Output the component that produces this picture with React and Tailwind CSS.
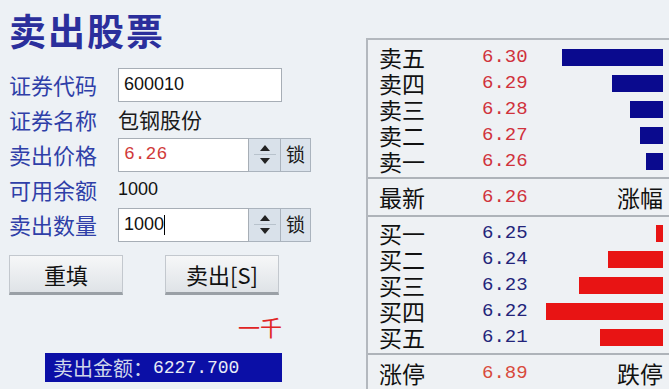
import React from "react";

const cjk = "font-['Noto_Sans_CJK_SC',sans-serif]";
const mono = "font-['Liberation_Mono',monospace]";

const sells = [
  { label: "卖五", price: "6.30", bar: 101 },
  { label: "卖四", price: "6.29", bar: 51 },
  { label: "卖三", price: "6.28", bar: 33 },
  { label: "卖二", price: "6.27", bar: 23 },
  { label: "卖一", price: "6.26", bar: 17 },
];

const buys = [
  { label: "买一", price: "6.25", bar: 7 },
  { label: "买二", price: "6.24", bar: 55 },
  { label: "买三", price: "6.23", bar: 84 },
  { label: "买四", price: "6.22", bar: 117 },
  { label: "买五", price: "6.21", bar: 63 },
];

const Spin = () => (
  <div className="flex h-full">
    <div className="w-[31px] h-full flex flex-col items-center justify-center gap-[3px] bg-[#d9e1ea] border-y border-[#aab3bd]">
      <svg width="10" height="6" viewBox="0 0 10 6">
        <path d="M5 0 L10 6 L0 6 Z" fill="#222" />
      </svg>
      <div className="w-[22px] h-px bg-[#b8c2cc]" />
      <svg width="10" height="6" viewBox="0 0 10 6">
        <path d="M0 0 L10 0 L5 6 Z" fill="#222" />
      </svg>
    </div>
    <div className="w-[31px] h-full flex items-center justify-center bg-[#dbe3ec] border border-[#aab3bd] text-[19px] text-[#1a1a1a]">
      锁
    </div>
  </div>
);

const BookRow = ({ label, price, bar, priceColor, barColor }) => (
  <div className="flex items-center h-[26px]">
    <div className="w-[103px] text-[23px] leading-none text-[#111]">{label}</div>
    <div className={`${mono} text-[19px] leading-none ${priceColor}`}>{price}</div>
    <div className="flex-1 flex justify-end">
      <div className={`h-[17px] ${barColor}`} style={{ width: bar }} />
    </div>
  </div>
);

export default function App() {
  return (
    <div className={`w-[669px] h-[389px] overflow-hidden bg-[#edf1f5] flex ${cjk}`}>
      {/* left form */}
      <div className="w-[366px] pl-[9px] flex flex-col">
        <div className="mt-[12px] h-[55px] text-[37px] font-bold leading-none text-[#2b2f9c] tracking-[2px]">
          卖出股票
        </div>

        <div className="flex flex-col text-[22px] text-[#2f3fa8]">
          <div className="h-[35px] flex items-center">
            <span className="w-[109px]">证券代码</span>
            <div className="w-[164px] h-[34px] bg-white border border-[#a7aeb6] flex items-center pl-[5px] text-[18px] text-[#111] font-['Liberation_Sans',sans-serif]">
              600010
            </div>
          </div>
          <div className="h-[35px] flex items-center">
            <span className="w-[109px]">证券名称</span>
            <span className="text-[#1a1a1a] text-[21px]">包钢股份</span>
          </div>
          <div className="h-[35px] flex items-center">
            <span className="w-[109px]">卖出价格</span>
            <div className="h-[34px] flex">
              <div className={`w-[131px] h-full bg-white border border-[#a7aeb6] flex items-center pl-[5px] text-[18px] text-[#d03a3a] ${mono}`}>
                6.26
              </div>
              <Spin />
            </div>
          </div>
          <div className="h-[35px] flex items-center">
            <span className="w-[109px]">可用余额</span>
            <span className="text-[18px] text-[#111] font-['Liberation_Sans',sans-serif]">1000</span>
          </div>
          <div className="h-[35px] flex items-center">
            <span className="w-[109px]">卖出数量</span>
            <div className="h-[34px] flex">
              <div className="w-[131px] h-full bg-white border border-[#a7aeb6] flex items-center pl-[5px] text-[18px] text-[#111] font-['Liberation_Sans',sans-serif]">
                1000<span className="w-px h-[20px] bg-black" />
              </div>
              <Spin />
            </div>
          </div>
        </div>

        {/* buttons */}
        <div className="mt-[13px] flex gap-[42px]">
          <button className="w-[114px] h-[40px] bg-gradient-to-b from-[#f6f7f8] to-[#dfe3e7] border border-[#c3c8ce] border-b-[3px] border-b-[#9aa0a6] text-[22px] text-[#111]">
            重填
          </button>
          <button className="w-[114px] h-[40px] bg-gradient-to-b from-[#f6f7f8] to-[#dfe3e7] border border-[#c3c8ce] border-b-[3px] border-b-[#9aa0a6] text-[22px] text-[#111]">
            卖出[S]
          </button>
        </div>

        <div className="mt-[20px] w-[273px] flex justify-end text-[22px] leading-none text-[#e02424]">
          一千
        </div>

        <div className="mt-[16px] ml-[36px] w-[237px] h-[29px] bg-[#0b0fa6] flex items-center pl-[8px] text-[20px] leading-none">
          <span className="text-[#cfd6ea]">卖出金额：</span>
          <span className={`${mono} text-[18px] text-[#e8ecf6]`}>6227.700</span>
        </div>
      </div>

      {/* right order book */}
      <div className="flex-1 pt-[38px]">
        <div className="h-full bg-[#eef1f4] border-l-2 border-t-2 border-[#b3b8be] pl-[11px] pr-[6px]">
          <div className="pt-[4px] pb-[3px]">
            {sells.map((r) => (
              <BookRow key={r.label} {...r} priceColor="text-[#d0323c]" barColor="bg-[#0a0a8e]" />
            ))}
          </div>
          <div className="-ml-[11px] -mr-[6px] border-t-2 border-[#aeb3b9]" />
          <div className="h-[36px] flex items-center">
            <div className="w-[103px] text-[23px] leading-none text-[#111]">最新</div>
            <div className={`${mono} text-[19px] leading-none text-[#d0323c]`}>6.26</div>
            <div className="flex-1 text-right text-[23px] leading-none text-[#111]">涨幅</div>
          </div>
          <div className="-ml-[11px] -mr-[6px] border-t-2 border-[#aeb3b9]" />
          <div className="pt-[3px] pb-[3px]">
            {buys.map((r) => (
              <BookRow key={r.label} {...r} priceColor="text-[#23247a]" barColor="bg-[#e81414]" />
            ))}
          </div>
          <div className="-ml-[11px] -mr-[6px] border-t-2 border-[#aeb3b9]" />
          <div className="h-[36px] flex items-center">
            <div className="w-[103px] text-[23px] leading-none text-[#111]">涨停</div>
            <div className={`${mono} text-[19px] leading-none text-[#d84a3c]`}>6.89</div>
            <div className="flex-1 text-right text-[23px] leading-none text-[#111]">跌停</div>
          </div>
        </div>
      </div>
    </div>
  );
}
